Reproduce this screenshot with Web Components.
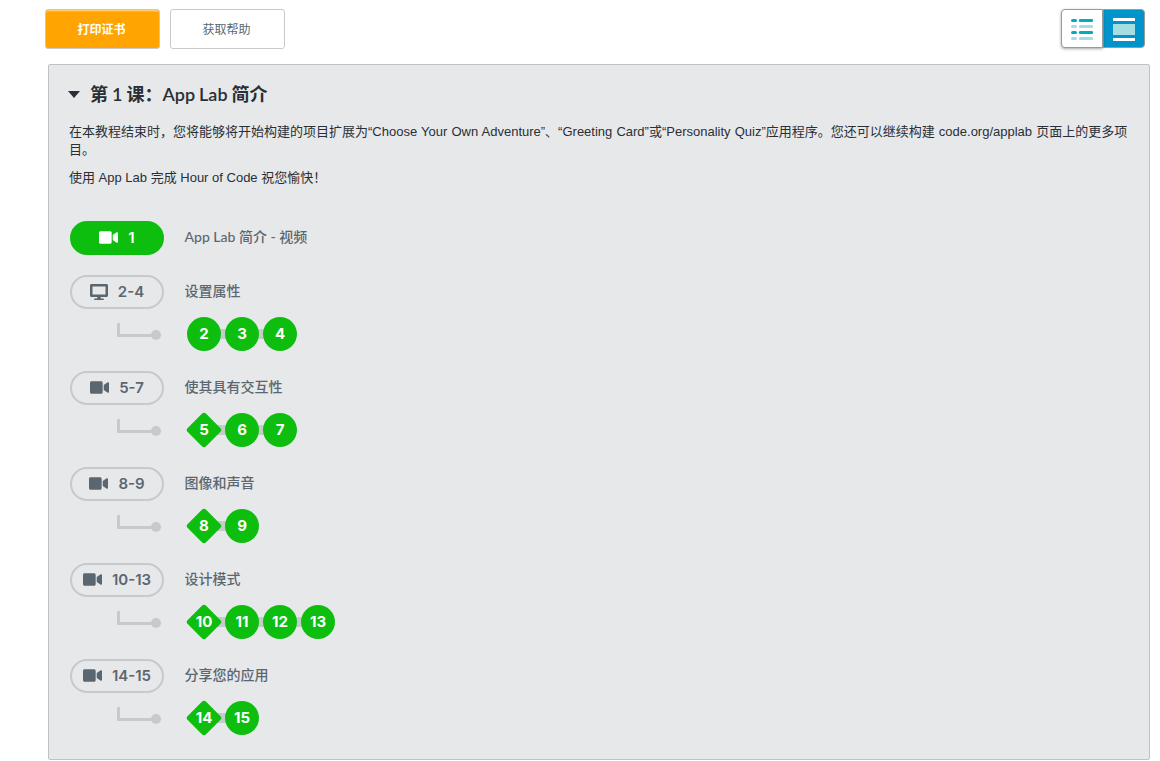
<!DOCTYPE html>
<html lang="zh-CN">
<head>
<meta charset="utf-8">
<title>App Lab</title>
<style>
	html, body { margin: 0; background: #fff; }
	body { font-family: "Liberation Sans", "Noto Sans CJK SC", sans-serif; color: #292f36; overflow: hidden; }
</style>
</head>
<body>
<course-page>
	<course-button slot="actions" primary>打印证书</course-button>
	<course-button slot="actions">获取帮助</course-button>
	<view-toggle slot="toggle"></view-toggle>
	<lesson-panel>
		<span slot="title">第 1 课：App Lab 简介</span>
		<p>在本教程结束时，您将能够将开始构建的项目扩展为“Choose Your Own Adventure”、“Greeting Card”或“Personality Quiz”应用程序。您还可以继续构建 code.org/applab 页面上的更多项目。</p>
		<p>使用 App Lab 完成 Hour of Code 祝您愉快！</p>
		<lesson-group slot="groups" icon="video" range="1" name="App Lab 简介 - 视频" done></lesson-group>
		<lesson-group slot="groups" icon="desktop" range="2-4" name="设置属性" steps="2,3,4"></lesson-group>
		<lesson-group slot="groups" icon="video" range="5-7" name="使其具有交互性" steps="*5,6,7"></lesson-group>
		<lesson-group slot="groups" icon="video" range="8-9" name="图像和声音" steps="*8,9"></lesson-group>
		<lesson-group slot="groups" icon="video" range="10-13" name="设计模式" steps="*10,11,12,13"></lesson-group>
		<lesson-group slot="groups" icon="video" range="14-15" name="分享您的应用" steps="*14,15"></lesson-group>
	</lesson-panel>
</course-page>

<script>
const ICONS = {
	video: '<svg width="19" height="17" viewBox="0 0 576 512"><path fill="currentColor" d="M336.2 64H47.8C21.4 64 0 85.4 0 111.8v288.4C0 426.6 21.4 448 47.8 448h288.4c26.4 0 47.8-21.4 47.8-47.8V111.8c0-26.4-21.4-47.8-47.8-47.8zm189.4 37.7L416 177.3v157.4l109.6 75.5c21.2 14.6 50.4-.3 50.4-25.8V127.500c0-25.4-29.1-40.4-50.4-25.8z"/></svg>',
	desktop: '<svg width="18" height="16" viewBox="0 0 576 512"><path fill="currentColor" fill-rule="evenodd" d="M528 0H48C21.5 0 0 21.5 0 48v320c0 26.5 21.5 48 48 48h192l-16 48h-72c-13.3 0-24 10.7-24 24s10.7 24 24 24h272c13.3 0 24-10.7 24-24s-10.7-24-24-24h-72l-16-48h192c26.5 0 48-21.5 48-48V48c0-26.5-21.5-48-48-48zm-32 336H80V80h416v256z"/></svg>'
};

class CoursePage extends HTMLElement {
	constructor() {
		super();
		this.attachShadow({mode: 'open'}).innerHTML = `
			<style>
				:host { display: block; }
				.top { display: flex; justify-content: space-between; padding: 9px 15px 15px 45px; height: 40px; }
				.actions { display: flex; gap: 10px; }
				.body { margin: 0 10px 0 48px; }
			</style>
			<div class="top">
				<div class="actions"><slot name="actions"></slot></div>
				<slot name="toggle"></slot>
			</div>
			<div class="body"><slot></slot></div>
		`;
	}
}

class CourseButton extends HTMLElement {
	constructor() {
		super();
		this.attachShadow({mode: 'open'}).innerHTML = `
			<style>
				:host {
					display: flex; align-items: center; justify-content: center;
					width: 115px; height: 40px; box-sizing: border-box; padding-right: 2px; padding-bottom: 1px;
					border: 1px solid #c6cacd; border-radius: 3px; background: #fff;
					font: 12px "Liberation Sans", "Noto Sans CJK SC", sans-serif; color: #5b6770;
				}
				:host([primary]) {
					background: #ffa400; color: #fff; font-weight: 700;
					box-shadow: inset 0 1px 0 0 #ffc966, inset 0 2px 0 0 #ffb52e;
				}
			</style>
			<slot></slot>
		`;
	}
}

class ViewToggle extends HTMLElement {
	constructor() {
		super();
		const dashes = [[9, '#00adbc'], [15, '#a6dde3'], [21, '#00adbc'], [27, '#a6dde3']].map(([y, c]) =>
			`<rect x="9" y="${y}" width="6" height="3" rx="1.5" fill="${c}"/><rect x="17" y="${y}" width="14" height="3" rx="1" fill="${c}"/>`
		).join('');
		this.attachShadow({mode: 'open'}).innerHTML = `
			<style>
				:host { display: flex; width: 84px; height: 39px; border-radius: 4px; }
				.item { width: 42px; height: 39px; box-sizing: border-box; border: 1px solid #949ca2; }
				.list { background: #fff; border-radius: 4px 0 0 4px; box-shadow: 0 1px 3px rgba(0,0,0,.35); position: relative; }
				.card { background: #0094ca; border-radius: 0 4px 4px 0; }
				svg { display: block; }
			</style>
			<div class="item list"><svg width="40" height="37" viewBox="0 0 40 37">${dashes}</svg></div>
			<div class="item card"><svg width="40" height="37" viewBox="0 0 40 37">
				<rect x="9" y="8" width="22" height="3" fill="#fff"/>
				<rect x="9" y="14" width="22" height="11" fill="#a6dde3"/>
				<rect x="9" y="28" width="22" height="3" fill="#fff"/>
			</svg></div>
		`;
	}
}

class LessonPanel extends HTMLElement {
	constructor() {
		super();
		this.attachShadow({mode: 'open'}).innerHTML = `
			<style>
				:host {
					display: block; box-sizing: border-box; height: 696px;
					background: #e7e8ea; border: 1px solid #bfc2c5; border-radius: 2px;
					padding: 16px 20px 0 20px;
				}
				h2 { margin: 0; display: flex; align-items: center; gap: 10px; height: 26px;
					font: 600 18px/26px Lato, "Noto Sans CJK SC", sans-serif; word-spacing: -.5px; color: #292f36; }
				.arrow { width: 0; height: 0; margin-left: -1px; border: 6px solid transparent; border-top: 7px solid #292f36; border-bottom: 0; }
				.text { margin-top: 16px; font: 13px/18px "Liberation Sans", "Noto Sans CJK SC", sans-serif; word-spacing: .5px; color: #292f36; }
				::slotted(p) { margin: 0 0 10px 0; }
				::slotted(p:last-of-type) { word-spacing: 0; }
				.groups { margin-top: 34px; display: flex; flex-direction: column; gap: 20px; padding-left: 1px; }
			</style>
			<h2><span class="arrow"></span><slot name="title"></slot></h2>
			<div class="text"><slot></slot></div>
			<div class="groups"><slot name="groups"></slot></div>
		`;
	}
}

class LessonGroup extends HTMLElement {
	constructor() {
		super();
		const name = this.getAttribute('name');
		const range = this.getAttribute('range');
		const icon = ICONS[this.getAttribute('icon')];
		const steps = this.getAttribute('steps');
		const bubbles = steps ? steps.split(',').map(s =>
			s[0] === '*' ? `<step-bubble diamond>${s.slice(1)}</step-bubble>` : `<step-bubble>${s}</step-bubble>`
		).join('') : '';
		const stepRow = steps ? `
			<svg class="branch" width="94" height="34" viewBox="0 0 94 34">
				<path d="M48.500 6V18.500H86" fill="none" stroke="#c6cacd" stroke-width="3"/>
				<circle cx="86" cy="18" r="5" fill="#c6cacd"/>
			</svg>
			<div class="steps">${bubbles}</div>` : '';
		this.attachShadow({mode: 'open'}).innerHTML = `
			<style>
				:host { display: grid; grid-template-columns: 94px 1fr; column-gap: 21px; row-gap: 8px; }
				.pill {
					display: flex; align-items: center; justify-content: center; gap: 10px;
					height: 34px; box-sizing: border-box; border-radius: 17px; padding-bottom: 1px;
					border: 2px solid #c6cacd; color: #5b6770;
					font: 600 15px Inter, sans-serif;
				}
				:host([done]) .pill { background: #0ebe0e; border-color: #0ebe0e; color: #fff; }
				.pill svg { display: block; }
				.name { align-self: center; padding-bottom: 4px; margin-left: -.5px; font: 500 14px Lato, "Noto Sans CJK SC", sans-serif; color: #5b6770; }
				.steps {
					justify-self: start; margin-left: 2px; display: flex; gap: 4px;
					background: linear-gradient(#c6cacd, #c6cacd) center / calc(100% - 34px) 10px no-repeat;
				}
				.branch { display: block; }
			</style>
			<div class="pill">${icon}<span>${range}</span></div>
			<div class="name">${name}</div>
			${stepRow}
		`;
	}
}

class StepBubble extends HTMLElement {
	constructor() {
		super();
		this.attachShadow({mode: 'open'}).innerHTML = `
			<style>
				:host {
					display: flex; align-items: center; justify-content: center; position: relative;
					width: 34px; height: 34px; border-radius: 50%; background: #0ebe0e;
					font: 700 15px Inter, sans-serif; color: #fff;
				}
				:host([diamond]) { background: none; }
				:host([diamond])::before {
					content: ""; position: absolute; left: 4px; top: 4px; width: 26px; height: 26px;
					background: #0ebe0e; border-radius: 3px; transform: rotate(45deg);
				}
				span { position: relative; padding-bottom: 1px; }
			</style>
			<span><slot></slot></span>
		`;
	}
}

customElements.define('course-page', CoursePage);
customElements.define('course-button', CourseButton);
customElements.define('view-toggle', ViewToggle);
customElements.define('lesson-panel', LessonPanel);
customElements.define('lesson-group', LessonGroup);
customElements.define('step-bubble', StepBubble);
</script>
</body>
</html>
